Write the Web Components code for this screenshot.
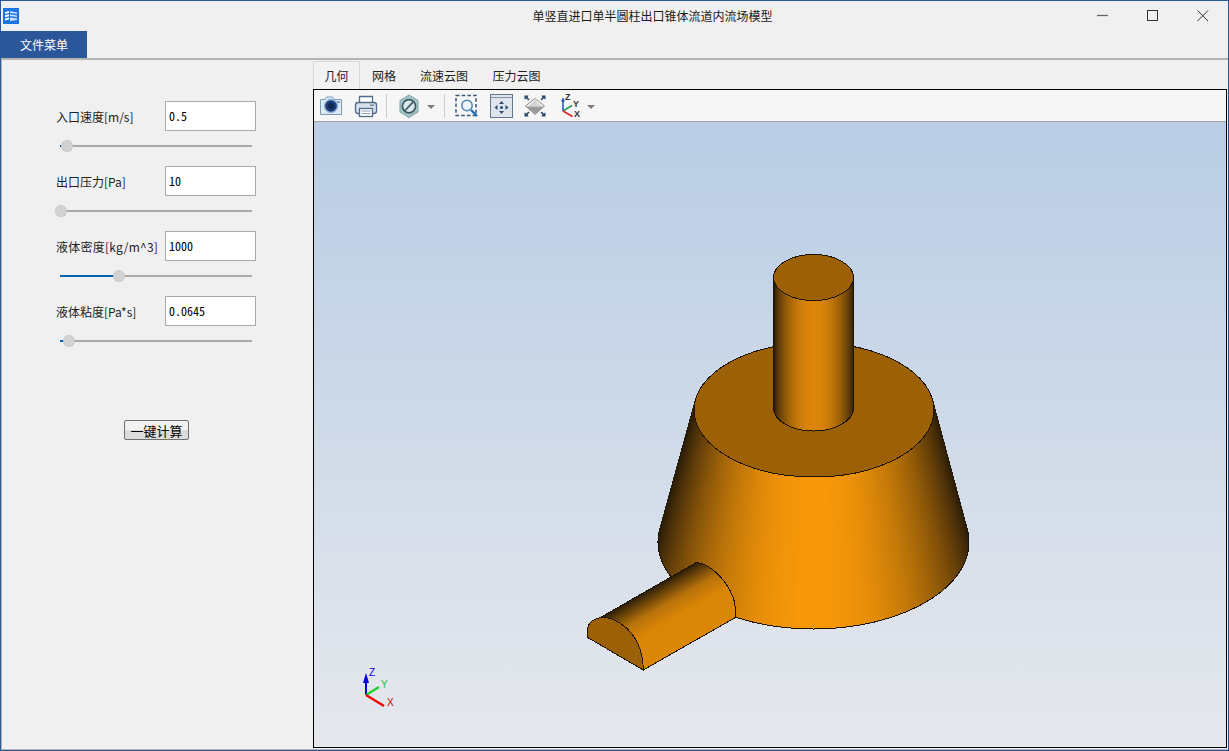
<!DOCTYPE html>
<html>
<head>
<meta charset="utf-8">
<title>单竖直进口单半圆柱出口锥体流道内流场模型</title>
<style>
  html, body { margin: 0; padding: 0; background: #f0f0f0; }
  body { font-family: "Noto Sans CJK SC", "Noto Sans", sans-serif; }
</style>
</head>
<body>
<app-window>
  <title-bar slot="title" text="单竖直进口单半圆柱出口锥体流道内流场模型"></title-bar>
  <menu-bar slot="menu" label="文件菜单"></menu-bar>
  <param-panel slot="side">
    <param-row label="入口速度[m/s]" value="0.5" pos="7"></param-row>
    <param-row label="出口压力[Pa]" value="10" pos="1"></param-row>
    <param-row label="液体密度[kg/m^3]" value="1000" pos="59" ls="0.25"></param-row>
    <param-row label="液体粘度[Pa*s]" value="0.0645" pos="9"></param-row>
    <calc-button>一键计算</calc-button>
  </param-panel>
  <tab-strip slot="tabs"></tab-strip>
  <view-toolbar slot="viewer"></view-toolbar>
  <model-view slot="viewer"></model-view>
</app-window>

<script>
class AppWindow extends HTMLElement {
  constructor() {
    super();
    const shadowRoot = this.attachShadow({ mode: "open" });
    shadowRoot.innerHTML = `
      <style>
        :host { display: flex; flex-direction: column; width: 1229px; height: 751px; box-sizing: border-box;
                border: 1px solid #2b579a; background: #f0f0f0; overflow: hidden; }
        .main { flex: 1; display: flex; min-height: 0; border-top: 2px solid #b4b4b4; border-left: 1px solid #b4b4b4; border-bottom: 1px solid #b4b4b4; }
        .right { flex: 1; display: flex; flex-direction: column; min-width: 0; padding-right: 1px; padding-bottom: 1px; }
        .frame { flex: 1; display: flex; flex-direction: column; min-height: 0; border: 1px solid #000; }
      </style>
      <slot name="title"></slot>
      <slot name="menu"></slot>
      <div class="main">
        <slot name="side"></slot>
        <div class="right">
          <slot name="tabs"></slot>
          <div class="frame"><slot name="viewer"></slot></div>
        </div>
      </div>`;
  }
}

class TitleBar extends HTMLElement {
  constructor() {
    super();
    const shadowRoot = this.attachShadow({ mode: "open" });
    shadowRoot.innerHTML = `
      <style>
        :host { display: grid; grid-template-columns: 150px 1fr 150px; align-items: center; height: 30px; flex: none; }
        .logo { display: flex; padding-left: 2px; }
        .text { text-align: center; font-size: 12px; color: #1a1a1a; padding: 0 0 2px 76px; }
        .btns { display: flex; justify-content: flex-end; }
        .btn { width: 50px; height: 30px; display: flex; align-items: center; justify-content: center; }
      </style>
      <div class="logo">
        <svg width="16" height="16" viewBox="0 0 16 16">
          <rect width="16" height="16" fill="#1a73e8"/>
          <path d="M2 4L6 3V5L2 6ZM2 7.3L6 6.3V8.3L2 9.3ZM2 10.6L6 9.6V11.6L2 12.6Z" fill="#fff"/>
          <path d="M7 3L14 4.5V6L7 4.8ZM7 6.3L14 7.5V9L7 8ZM7 9.6L14 10.5V12L7 13Z" fill="#cfe2fb"/>
        </svg>
      </div>
      <div class="text"></div>
      <div class="btns">
        <div class="btn"><svg width="12" height="12"><path d="M0 5.5H11" stroke="#666" stroke-width="1.3"/></svg></div>
        <div class="btn"><svg width="12" height="12"><rect x="0.5" y="0.5" width="10" height="10" fill="none" stroke="#333"/></svg></div>
        <div class="btn"><svg width="12" height="12"><path d="M0.5 0.5L11 11M11 0.5L0.5 11" stroke="#333" stroke-width="1"/></svg></div>
      </div>`;
    shadowRoot.querySelector(".text").textContent = this.getAttribute("text");
  }
}

class MenuBar extends HTMLElement {
  constructor() {
    super();
    const shadowRoot = this.attachShadow({ mode: "open" });
    shadowRoot.innerHTML = `
      <style>
        :host { display: flex; height: 27px; flex: none; }
        .item { width: 86px; background: #2b579a; color: #fff; font-size: 12px; display: flex; align-items: center; justify-content: center; }
      </style>
      <div class="item"></div>`;
    shadowRoot.querySelector(".item").textContent = this.getAttribute("label");
  }
}

class ParamPanel extends HTMLElement {
  constructor() {
    super();
    const shadowRoot = this.attachShadow({ mode: "open" });
    shadowRoot.innerHTML = `
      <style>
        :host { display: flex; flex-direction: column; width: 311px; flex: none; box-sizing: border-box; padding: 41px 0 0 54px; }
      </style>
      <slot></slot>`;
  }
}

class ParamRow extends HTMLElement {
  constructor() {
    super();
    const shadowRoot = this.attachShadow({ mode: "open" });
    shadowRoot.innerHTML = `
      <style>
        :host { display: block; height: 65px; }
        .top { display: flex; align-items: center; height: 30px; }
        label { width: 109px; font-size: 12px; color: #222; white-space: nowrap; }
        .input { width: 91px; height: 30px; box-sizing: border-box; border: 1px solid #a9a9a9; background: #fff; padding: 0 0 1px 3px;
                 display: flex; align-items: center; font: 12px "Noto Sans Mono CJK SC", "Liberation Mono", monospace; color: #000; }
        .track { position: relative; margin: 14px 0 0 4px; width: 192px; height: 2px; background: #a9a9a9; }
        .fill { height: 2px; background: #0a64b4; }
        .thumb { position: absolute; top: -5px; width: 10px; height: 10px; margin-left: -6px; border-radius: 50%; background: #d2d2d2; border: 1px dotted #bcbcbc; }
      </style>
      <div class="top"><label></label><div class="input"></div></div>
      <div class="track"><div class="fill"></div><div class="thumb"></div></div>`;
    const label = shadowRoot.querySelector("label");
    label.textContent = this.getAttribute("label");
    if (this.hasAttribute("ls")) label.style.letterSpacing = this.getAttribute("ls") + "px";
    shadowRoot.querySelector(".input").textContent = this.getAttribute("value");
    const px = Number(this.getAttribute("pos"));
    shadowRoot.querySelector(".fill").style.width = px + "px";
    shadowRoot.querySelector(".thumb").style.left = px + "px";
  }
}

class CalcButton extends HTMLElement {
  constructor() {
    super();
    const shadowRoot = this.attachShadow({ mode: "open" });
    shadowRoot.innerHTML = `
      <style>
        :host { display: flex; align-self: flex-start; margin: 59px 0 0 68px; width: 65px; height: 20px; box-sizing: border-box;
                border: 1px solid #6f6f6f; border-radius: 2px; align-items: center; justify-content: center;
                font-size: 13px; color: #000; background: linear-gradient(#f2f2f2 0 50%, #dcdcdc 50%); }
      </style>
      <slot></slot>`;
  }
}

class TabStrip extends HTMLElement {
  constructor() {
    super();
    const shadowRoot = this.attachShadow({ mode: "open" });
    shadowRoot.innerHTML = `
      <style>
        :host { display: flex; height: 28px; flex: none; align-items: flex-end; margin-top: 1px; }
        .tab { height: 28px; box-sizing: border-box; display: flex; align-items: center; justify-content: center; font-size: 12px; color: #222; }
        .on { width: 47px; border: 1px solid #d9d9d9; border-bottom: none; background: #f2f2f2; }
      </style>
      <div class="tab on">几何</div>
      <div class="tab" style="width:48px">网格</div>
      <div class="tab" style="width:72px">流速云图</div>
      <div class="tab" style="width:73px">压力云图</div>`;
  }
}

class ViewToolbar extends HTMLElement {
  constructor() {
    super();
    const shadowRoot = this.attachShadow({ mode: "open" });
    // every icon uses page coordinates in its viewBox, so it can be checked against the screenshot
    shadowRoot.innerHTML = `
      <style>
        :host { display: flex; height: 32px; flex: none; box-sizing: border-box; background: #f6f6f6; border-bottom: 1px solid #a5a5a5; padding-left: 4px; }
        svg { display: block; flex: none; }
        .sep { width: 1px; height: 24px; margin-top: 4px; background: #cfcfcf; flex: none; }
      </style>
      <svg width="26" height="31" viewBox="318 90 26 31">
        <path d="M320.5 99.5H325L326.5 97H332.5L334 99.5H341.5V114.5H320.5Z" fill="#dfeaf4" stroke="#7b9ab6"/>
        <circle cx="331" cy="106" r="6.5" fill="#1b3f7e" stroke="#8fb0d0" stroke-width="1.4"/>
        <circle cx="331" cy="106" r="3" fill="#12284e"/>
        <rect x="337" y="101" width="3" height="2" fill="#7b9ab6"/>
      </svg>
      <svg style="margin-left:9px" width="25" height="31" viewBox="353 90 25 31">
        <path d="M359.5 103V96.5H372.5V103" fill="#fff" stroke="#4f6d8a" stroke-width="1.3"/>
        <rect x="355.5" y="102.5" width="21" height="11" rx="2.5" fill="#d5e0ea" stroke="#4f6d8a" stroke-width="1.3"/>
        <rect x="359.5" y="108.5" width="13" height="8" fill="#fff" stroke="#4f6d8a" stroke-width="1.3"/>
        <path d="M361.5 111H370.5M361.5 113.5H370.5" stroke="#8aa0b4"/>
        <rect x="370" y="104.5" width="4" height="1.4" fill="#6d8296"/>
      </svg>
      <div class="sep" style="margin-left:8px"></div>
      <svg style="margin-left:11px" width="22" height="31" viewBox="398 90 22 31">
        <path d="M409 95L418 100.5V112L409 117.5L400 112V100.5Z" fill="#a9c7c9" stroke="#7aa0a5"/>
        <circle cx="409" cy="106.3" r="6.6" fill="#dbe8ea" stroke="#3d5a62" stroke-width="1.7"/>
        <path d="M404.6 111L413.4 101.6" stroke="#3d5a62" stroke-width="1.7"/>
      </svg>
      <svg style="margin-left:6px" width="10" height="31" viewBox="426 90 10 31"><path d="M427 105H435L431 109Z" fill="#7d7d7d"/></svg>
      <div class="sep" style="margin-left:8px"></div>
      <svg style="margin-left:9px" width="25" height="31" viewBox="454 90 25 31">
        <path d="M456 95.5H476V115.5H456Z" fill="none" stroke="#3a5676" stroke-width="1.5" stroke-dasharray="3.5 2.2"/>
        <circle cx="467" cy="105.5" r="5.2" fill="#eef5fb" stroke="#4a86b8" stroke-width="1.5"/>
        <path d="M471 110L477 116" stroke="#1f6fb8" stroke-width="2.4"/>
      </svg>
      <svg style="margin-left:9px" width="26" height="31" viewBox="488 90 26 31">
        <rect x="490.5" y="94.5" width="22" height="23" fill="#dfe5ed" stroke="#63778c"/>
        <path d="M491 97.5H512" stroke="#7f92a6"/>
        <path d="M501.5 101L504 104H499ZM501.5 114L499 111H504ZM494.5 107.5L497.5 105V110ZM508.5 107.5L505.5 105V110Z" fill="#2c4a6b"/>
        <circle cx="501.5" cy="107.5" r="1.5" fill="#2c4a6b"/>
      </svg>
      <svg style="margin-left:8px" width="27" height="31" viewBox="522 90 27 31">
        <path d="M535 98.5L544.5 106L535 114.5L525.5 106Z" fill="#f4f4f4" stroke="#8c8c8c"/>
        <path d="M535 100L541.5 106H528.5Z" fill="#d4d4d4"/>
        <path d="M526 106.5H544L535 114Z" fill="#9a9a9a"/>
        <path d="M524.5 95.5H528.5L527.6 97.4L529.5 99.3L528.3 100.5L526.4 98.6L524.5 99.5ZM545.5 95.5H541.5L542.4 97.4L540.5 99.3L541.7 100.5L543.6 98.6L545.5 99.5ZM524.5 116.5H528.5L527.6 114.6L529.5 112.7L528.3 111.5L526.4 113.4L524.5 112.5ZM545.5 116.5H541.5L542.4 114.6L540.5 112.7L541.7 111.5L543.6 113.4L545.5 112.5Z" fill="#2c4a6b"/>
      </svg>
      <svg style="margin-left:11px" width="24" height="31" viewBox="560 90 24 31">
        <path d="M563 111V100" stroke="#1f4fc0" stroke-width="1.5"/><path d="M563 97.5L565 101.5H561Z" fill="#1f4fc0"/>
        <path d="M563 111L572 105.5" stroke="#1fa04a" stroke-width="1.5"/>
        <path d="M563 111L572.5 116.5" stroke="#e02020" stroke-width="1.5"/>
        <text x="565" y="100" font-size="9" font-weight="700" font-family="Liberation Sans" fill="#333">Z</text>
        <text x="573" y="106.5" font-size="9" font-weight="700" font-family="Liberation Sans" fill="#333">Y</text>
        <text x="574" y="117" font-size="9" font-weight="700" font-family="Liberation Sans" fill="#333">X</text>
      </svg>
      <svg style="margin-left:2px" width="10" height="31" viewBox="586 90 10 31"><path d="M587 105H595L591 109Z" fill="#7d7d7d"/></svg>`;
  }
}

class ModelView extends HTMLElement {
  constructor() {
    super();
    const shadowRoot = this.attachShadow({ mode: "open" });
    shadowRoot.innerHTML = `
      <style>
        :host { display: block; flex: 1; min-height: 0; background: linear-gradient(#b9cde5, #e6e8ed); overflow: hidden; }
        svg { display: block; }
      </style>
      <svg width="912" height="625" viewBox="314 122 912 625"></svg>`;
    this.draw(shadowRoot.querySelector("svg"));
  }

  // colour for a normal that is c sideways from the eye (c in -1..1)
  shade(c, col) {
    const n = Math.sqrt(Math.max(0, 1 - c * c));
    const d = [38, 26, 8];
    return "rgb(" + col.map((v, i) => Math.round(d[i] + (v - d[i]) * Math.pow(n, 1.6))).join(",") + ")";
  }

  // visible side of a cone/cylinder as thin strips between two ellipses.
  // over is how far (radians) the silhouette lies past the ellipse's own left/right ends
  strips(a, b, col, over) {
    let out = "";
    const steps = 160;
    const pt = (e, t) => `${(e.x + e.rx * Math.cos(t)).toFixed(2)},${(e.y + e.ry * Math.sin(t)).toFixed(2)}`;
    const span = Math.PI + 2 * over;
    for (let i = 0; i < steps; i++) {
      const t0 = -over + span * i / steps, t1 = -over + span * (i + 1) / steps;
      const c = this.shade(Math.cos(Math.PI * (i + 0.5) / steps), col);
      out += `<polygon points="${pt(a, t0)} ${pt(a, t1)} ${pt(b, t1)} ${pt(b, t0)}" fill="${c}" stroke="${c}" stroke-width=".6"/>`;
    }
    return out;
  }

  draw(svg) {
    const topCap = { x: 813.5, y: 277.5, rx: 40, ry: 23 };
    const pipeFoot = { x: 813.5, y: 408, rx: 40, ry: 23 };
    const coneTop = { x: 814, y: 410, rx: 120, ry: 67 };
    const coneBase = { x: 813.5, y: 542, rx: 155.5, ry: 87 };
    const over = 0.15;
    const line = `fill="none" stroke="#1c1408" stroke-width="1"`;
    const flat = "#9c6107";
    const halfBody = "M600 617.7 L696.7 562.3 C713 565 727 582 733 597 C735.5 604 735.7 612 735.7 617.3 L643.3 670 C643.3 660 641 650 637 642 C630 628 615 617 600 617.7Z";
    const bx = 155.5 * Math.cos(over), by = 87 * Math.sin(over);
    svg.innerHTML = `
      <defs>
        <linearGradient id="half" gradientUnits="userSpaceOnUse" x1="648" y1="590" x2="681.5" y2="648">
          <stop offset="0" stop-color="#2a1c08"/><stop offset="0.14" stop-color="#6a4408"/>
          <stop offset="0.32" stop-color="#b8720a"/><stop offset="0.55" stop-color="#d98506"/><stop offset="1" stop-color="#dc8806"/>
        </linearGradient>
      </defs>
      <g shape-rendering="crispEdges">
        ${this.strips(coneTop, coneBase, [248, 152, 9], over)}
        <path d="M${813.5 + bx} ${542 - by} A155.5 87 0 1 1 ${813.5 - bx} ${542 - by}" ${line}/>
        <ellipse cx="814" cy="410" rx="120" ry="67" fill="${flat}" stroke="#1c1408"/>
        ${this.strips(pipeFoot, topCap, [220, 134, 8], 0)}
        <path d="M773.5 277.5 V408 A40 23 0 0 0 853.5 408 V277.5" ${line}/>
        <ellipse cx="813.5" cy="277.5" rx="40" ry="23" fill="${flat}" stroke="#1c1408"/>
        <path d="${halfBody}" fill="url(#half)" stroke="#1c1408"/>
        <path d="M587.3 637.3 V630 C588 622 595 618 602 617.5 C615 617 630 628 637 642 C641 650 643.3 660 643.3 670Z" fill="${flat}" stroke="#1c1408"/>
      </g>
      <path d="M366 695 V680" stroke="#0000e0" stroke-width="2"/><path d="M366 673L369 683H363Z" fill="#0000e0"/>
      <path d="M366 695 L379 687" stroke="#20d030" stroke-width="2.4"/>
      <path d="M366 695 L384 706" stroke="#f00000" stroke-width="2.4"/>
      <text x="369" y="675.5" font-family="Liberation Sans" font-size="10" fill="#0000e0">Z</text>
      <text x="381" y="688" font-family="Liberation Sans" font-size="10" fill="#20c030">Y</text>
      <text x="387" y="706" font-family="Liberation Sans" font-size="10" fill="#d00000">X</text>`;
  }
}

customElements.define("app-window", AppWindow);
customElements.define("title-bar", TitleBar);
customElements.define("menu-bar", MenuBar);
customElements.define("param-panel", ParamPanel);
customElements.define("param-row", ParamRow);
customElements.define("calc-button", CalcButton);
customElements.define("tab-strip", TabStrip);
customElements.define("view-toolbar", ViewToolbar);
customElements.define("model-view", ModelView);
</script>
</body>
</html>
